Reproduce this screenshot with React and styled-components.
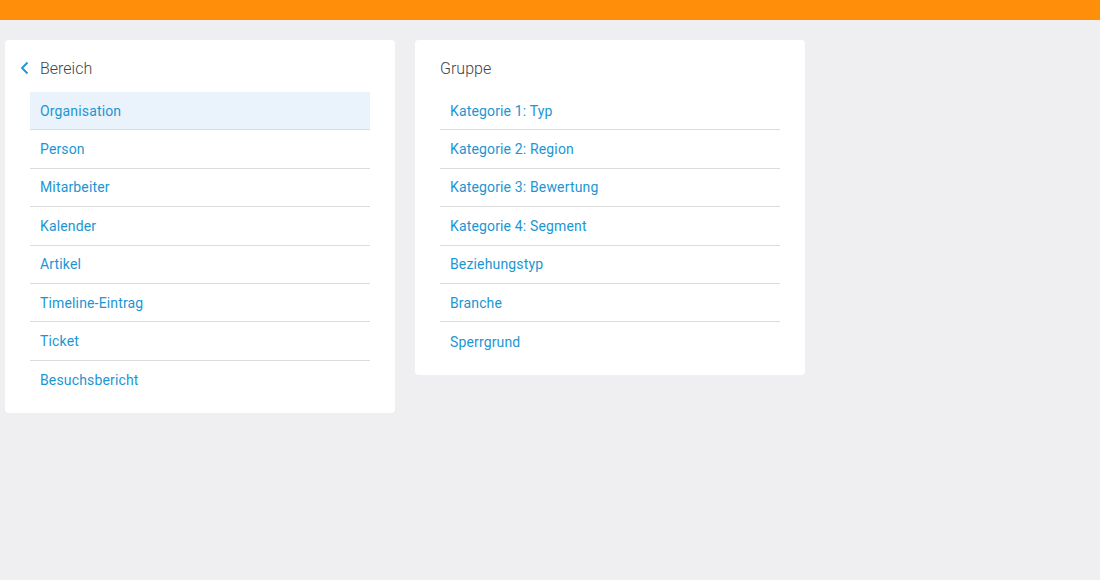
import React from "react";
import styled, { createGlobalStyle } from "styled-components";

const Global = createGlobalStyle`
  html, body { margin: 0; padding: 0; }
  body {
    background: #efeff1;
    font-family: Roboto, "Noto Sans", sans-serif;
    width: 1100px;
    height: 580px;
    overflow: hidden;
  }
`;

const TopBar = styled.div`
  height: 20px;
  background: #ff8f0b;
`;

const Columns = styled.div`
  display: flex;
  align-items: flex-start;
  gap: 20px;
  padding: 20px 5px;
`;

const Card = styled.section`
  width: 390px;
  box-sizing: border-box;
  background: #fff;
  border-radius: 4px;
  padding: 0 25px 14px;
`;

const Header = styled.div`
  height: 52px;
  display: flex;
  align-items: center;
  padding-top: 4px;
  box-sizing: border-box;
  margin-left: ${(p) => (p.$back ? "-10px" : "0")};
  gap: 10px;
`;

const Title = styled.h2`
  margin: 0;
  font-size: 16px;
  font-weight: 300;
  color: #444;
`;

const Back = styled.svg`
  width: 10px;
  height: 14px;
  display: block;
`;

const List = styled.ul`
  list-style: none;
  margin: 0;
  padding: 0;
`;

const Item = styled.li`
  height: 38.4px;
  box-sizing: border-box;
  display: flex;
  align-items: center;
  padding: 0 10px;
  font-size: 14px;
  letter-spacing: 0.15px;
  color: #1b96d3;
  background: ${(p) => (p.$active ? "#eaf3fb" : "transparent")};
  border-bottom: 1px solid #dcdcdc;
  &:last-child { border-bottom: none; }
`;

const bereich = [
  "Organisation",
  "Person",
  "Mitarbeiter",
  "Kalender",
  "Artikel",
  "Timeline-Eintrag",
  "Ticket",
  "Besuchsbericht",
];

const gruppe = [
  "Kategorie 1: Typ",
  "Kategorie 2: Region",
  "Kategorie 3: Bewertung",
  "Kategorie 4: Segment",
  "Beziehungstyp",
  "Branche",
  "Sperrgrund",
];

export default function App() {
  return (
    <>
      <Global />
      <TopBar />
      <Columns>
        <Card>
          <Header $back>
            <Back viewBox="0 0 10 14">
              <path d="M7.5 1.5 L2 7 L7.5 12.5" fill="none" stroke="#1b96d3" strokeWidth="1.8" />
            </Back>
            <Title>Bereich</Title>
          </Header>
          <List>
            {bereich.map((t, i) => (
              <Item key={t} $active={i === 0}>{t}</Item>
            ))}
          </List>
        </Card>
        <Card>
          <Header>
            <Title>Gruppe</Title>
          </Header>
          <List>
            {gruppe.map((t) => (
              <Item key={t}>{t}</Item>
            ))}
          </List>
        </Card>
      </Columns>
    </>
  );
}
